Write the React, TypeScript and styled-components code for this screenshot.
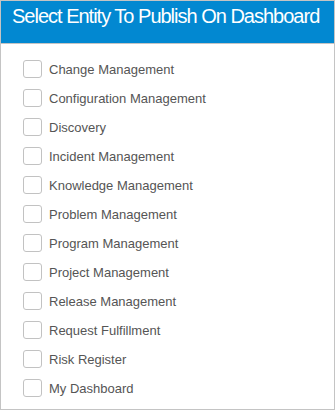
import React, { useState } from "react";
import styled, { createGlobalStyle } from "styled-components";

const entities = [
    "Change Management",
    "Configuration Management",
    "Discovery",
    "Incident Management",
    "Knowledge Management",
    "Problem Management",
    "Program Management",
    "Project Management",
    "Release Management",
    "Request Fulfillment",
    "Risk Register",
    "My Dashboard",
];

const PublishPanel = () => {
    const [checked, setChecked] = useState<string[]>([]);

    const toggle = (name: string) => {
        setChecked((cur) =>
            cur.includes(name) ? cur.filter((n) => n !== name) : [...cur, name]
        );
    };

    return (
        <Panel>
            <Header>Select Entity To Publish On Dashboard</Header>
            <List>
                {entities.map((name) => (
                    <Row key={name} onClick={() => toggle(name)}>
                        <Box $on={checked.includes(name)} />
                        <Label>{name}</Label>
                    </Row>
                ))}
            </List>
        </Panel>
    );
};

export default function App() {
    return (
        <>
            <GlobalStyle />
            <PublishPanel />
        </>
    );
}

const GlobalStyle = createGlobalStyle`
    html, body {
        margin: 0;
        padding: 0;
        background: #ffffff;
    }
    * {
        box-sizing: border-box;
    }
`;

const Panel = styled.div`
    width: 335px;
    height: 410px;
    border: 1px solid #c4c4c4;
    background: #ffffff;
    font-family: Arial, "Liberation Sans", sans-serif;
`;

const Header = styled.div`
    height: 43px;
    padding: 2px 0 0 11px;
    background: #0288d1;
    border-bottom: 1px solid #c4c4c4;
    color: #ffffff;
    font-size: 20px;
    letter-spacing: -1px;
    line-height: 26px;
    white-space: nowrap;
`;

const List = styled.div`
    display: flex;
    flex-direction: column;
    gap: 11px;
    padding: 16px 0 0 22px;
`;

const Row = styled.label`
    display: flex;
    align-items: center;
    gap: 7px;
    height: 18px;
    cursor: pointer;
`;

const Box = styled.span<{ $on: boolean }>`
    width: 19px;
    height: 18px;
    border: 1px solid #c2c2c2;
    border-radius: 3px;
    background: ${(p) => (p.$on ? "#0288d1" : "#ffffff")};
`;

const Label = styled.span`
    font-size: 13px;
    color: #555555;
`;
